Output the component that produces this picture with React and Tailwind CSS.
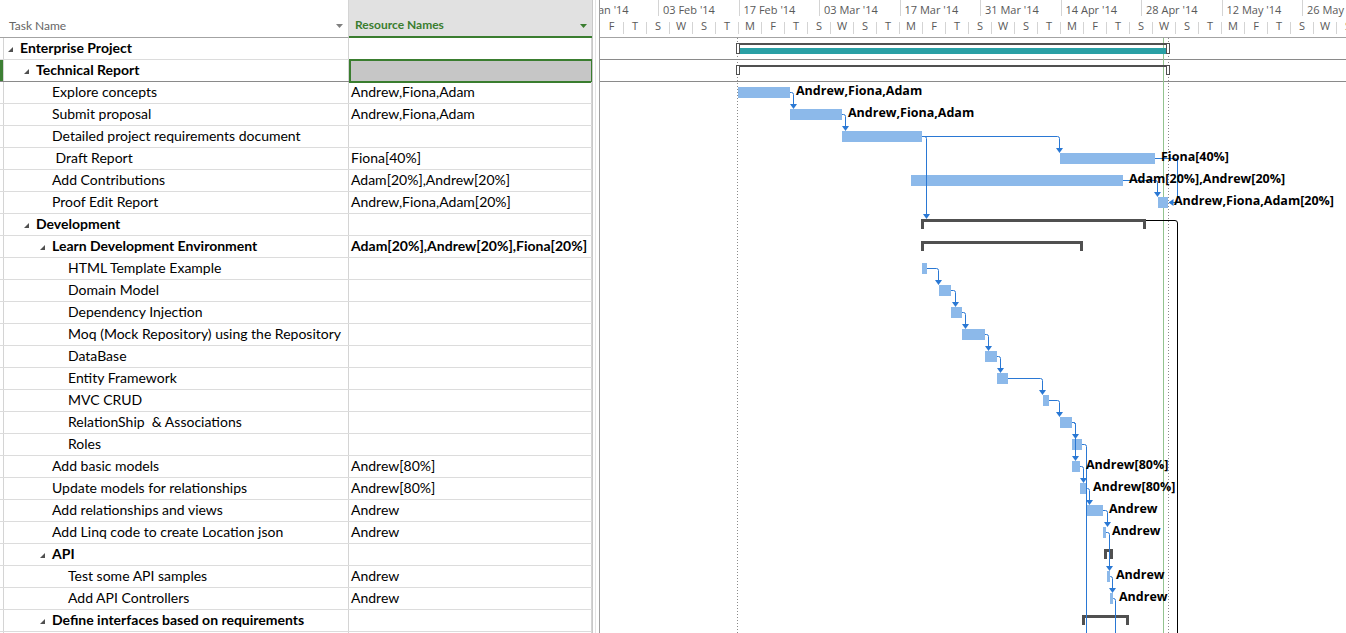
import React from 'react';

const rows = [
  { name: 'Enterprise Project', level: 0, summary: true },
  { name: 'Technical Report', level: 1, summary: true, selected: true },
  { name: 'Explore concepts', level: 2, res: 'Andrew,Fiona,Adam' },
  { name: 'Submit proposal', level: 2, res: 'Andrew,Fiona,Adam' },
  { name: 'Detailed project requirements document', level: 2 },
  { name: ' Draft Report', level: 2, res: 'Fiona[40%]' },
  { name: 'Add Contributions', level: 2, res: 'Adam[20%],Andrew[20%]' },
  { name: 'Proof Edit Report', level: 2, res: 'Andrew,Fiona,Adam[20%]' },
  { name: 'Development', level: 1, summary: true },
  { name: 'Learn Development Environment', level: 2, summary: true, res: 'Adam[20%],Andrew[20%],Fiona[20%]' },
  { name: 'HTML Template Example', level: 3 },
  { name: 'Domain Model', level: 3 },
  { name: 'Dependency Injection', level: 3 },
  { name: 'Moq (Mock Repository) using the Repository', level: 3 },
  { name: 'DataBase', level: 3 },
  { name: 'Entity Framework', level: 3 },
  { name: 'MVC CRUD', level: 3 },
  { name: 'RelationShip  & Associations', level: 3 },
  { name: 'Roles', level: 3 },
  { name: 'Add basic models', level: 2, res: 'Andrew[80%]' },
  { name: 'Update models for relationships', level: 2, res: 'Andrew[80%]' },
  { name: 'Add relationships and views', level: 2, res: 'Andrew' },
  { name: 'Add Linq code to create Location json', level: 2, res: 'Andrew' },
  { name: 'API', level: 2, summary: true },
  { name: 'Test some API samples', level: 3, res: 'Andrew' },
  { name: 'Add API Controllers', level: 3, res: 'Andrew' },
  { name: 'Define interfaces based on requirements', level: 2, summary: true },
  { name: '', level: 2 },
];

const summaryPad = { 0: 'pl-[4px]', 1: 'pl-[20px]', 2: 'pl-[36px]' };
const taskPad = { 2: 'pl-[48px]', 3: 'pl-[64px]' };

const months = ["03 Feb '14", "17 Feb '14", "03 Mar '14", "17 Mar '14", "31 Mar '14", "14 Apr '14", "28 Apr '14", "12 May '14", "26 May '14"];
const dayLetters = ['F', 'T', 'S', 'W', 'S', 'T', 'M'];

// gantt geometry, page coordinates
const top = (r) => 38 + 22 * r + 5;
const mid = (r) => 38 + 22 * r + 10;

const tasks = [
  [2, 738, 790, 'Andrew,Fiona,Adam'],
  [3, 790, 842, 'Andrew,Fiona,Adam'],
  [4, 842, 922],
  [5, 1060, 1155, 'Fiona[40%]'],
  [6, 911, 1123, 'Adam[20%],Andrew[20%]'],
  [7, 1158, 1168, 'Andrew,Fiona,Adam[20%]'],
  [10, 922, 927],
  [11, 939, 951],
  [12, 951, 962],
  [13, 962, 985],
  [14, 985, 997],
  [15, 997, 1008],
  [16, 1043, 1049],
  [17, 1060, 1072],
  [18, 1072, 1082],
  [19, 1072, 1080, 'Andrew[80%]'],
  [20, 1080, 1087, 'Andrew[80%]'],
  [21, 1087, 1103, 'Andrew'],
  [22, 1103, 1106, 'Andrew'],
  [24, 1107, 1110, 'Andrew'],
  [25, 1110, 1113, 'Andrew'],
];

const summaries = [
  [8, 921, 1146],
  [9, 921, 1083],
  [23, 1104, 1113],
  [26, 1082, 1129],
];

const links = [
  [2, 790, 793, 3],
  [3, 842, 845, 4],
  [4, 922, 1059, 5],
  [4, 922, 926, 8],
  [6, 1123, 1157, 7],
  [10, 927, 938, 11],
  [11, 951, 955, 12],
  [12, 962, 965, 13],
  [13, 985, 988, 14],
  [14, 997, 1000, 15],
  [15, 1008, 1042, 16],
  [16, 1049, 1059, 17],
  [17, 1072, 1075, 19],
  [17, 1072, 1075, 18],
  [19, 1080, 1083, 20],
  [20, 1087, 1089, 21],
  [21, 1103, 1107, 22],
  [22, 1106, 1109, 24],
  [24, 1110, 1112, 25],
];

const LINK = '#2a78d4';
const BAR = '#8cb9ea';
const SUM = '#505050';

const linkPath = (fx, y, vx, yEnd) =>
  `M${fx} ${y + 0.5} H${vx - 1.5} Q${vx + 0.5} ${y + 0.5} ${vx + 0.5} ${y + 2.5} V${yEnd}`;

const Tri = () => (
  <svg width="5" height="5" viewBox="0 0 5 5" className="shrink-0 mt-[3px]">
    <path d="M5 0 L5 5 L0 5 Z" fill="#505050" />
  </svg>
);

const DropArrow = ({ color }) => (
  <svg width="7" height="4" viewBox="0 0 7 4" className="shrink-0">
    <path d="M0 0 H7 L3.5 4 Z" fill={color} />
  </svg>
);

function TaskRow({ row }) {
  const pad = row.summary ? summaryPad[row.level] : taskPad[row.level];
  return (
    <div className={`flex h-[22px] border-b ${row.selected ? 'border-[#8a8a8a]' : 'border-[#dcdcdc]'}`}>
      <div className={`w-[4px] shrink-0 border-r border-[#d4d4d4] ${row.selected ? 'bg-[#3d7f34]' : ''}`} />
      <div className={`w-[345px] shrink-0 flex items-center pb-[2px] border-r border-[#d4d4d4] ${pad}`}>
        {row.summary && <Tri />}
        <span className={`whitespace-pre ${row.summary ? 'ml-[7px] font-bold' : ''}`}>{row.name}</span>
      </div>
      {row.selected ? (
        <div className="w-[244px] shrink-0 -mt-[1px] h-[24px] border-2 border-[#3a7d2f] bg-[#c6c6c6]" />
      ) : (
        <div className={`w-[243px] shrink-0 flex items-center pb-[2px] pl-[2px] border-r border-[#d4d4d4] ${row.summary ? 'font-bold' : ''}`}>
          {row.res}
        </div>
      )}
    </div>
  );
}

function GanttBody() {
  return (
    <svg width="746" height="595" viewBox="600 38 746 595" className="block">
      {/* selected row outline */}
      <line x1="600" x2="1346" y1="59.5" y2="59.5" stroke="#8a8a8a" />
      <line x1="600" x2="1346" y1="81.5" y2="81.5" stroke="#8a8a8a" />

      {/* project start / status / finish lines */}
      <line x1="737.5" x2="737.5" y1="38" y2="633" stroke="#8a8a8a" strokeDasharray="1 2" />
      <line x1="1163.5" x2="1163.5" y1="38" y2="633" stroke="#93c38f" />
      <line x1="1168.5" x2="1168.5" y1="38" y2="633" stroke="#8a8a8a" strokeDasharray="1 2" />

      {/* project summary */}
      <rect x="737" y="43" width="432" height="2" fill={SUM} />
      <rect x="739" y="48" width="428" height="6" fill="#2aa0a5" />
      <rect x="736.5" y="43.5" width="3" height="10" fill="#fff" stroke={SUM} />
      <rect x="1166.5" y="43.5" width="3" height="10" fill="#fff" stroke={SUM} />

      {/* technical report summary */}
      <rect x="737" y="65" width="432" height="2" fill={SUM} />
      <rect x="736.5" y="65.5" width="3" height="9" fill="#fff" stroke={SUM} />
      <rect x="1166.5" y="65.5" width="3" height="9" fill="#fff" stroke={SUM} />

      {summaries.map(([r, x1, x2]) => (
        <g key={`s${r}`} fill={SUM}>
          <rect x={x1} y={top(r)} width={x2 - x1} height="3" />
          <rect x={x1} y={top(r)} width="3" height="10" />
          <rect x={x2 - 3} y={top(r)} width="3" height="10" />
        </g>
      ))}

      {tasks.map(([r, x1, x2]) => (
        <rect key={`b${r}`} x={x1} y={top(r)} width={x2 - x1} height="11" fill={BAR} />
      ))}

      {/* development summary successor */}
      <path d="M1146 220.5 H1175 Q1177.5 220.5 1177.5 223 V633" fill="none" stroke="#000" />

      {links.map(([fr, fx, vx, tr], i) => (
        <g key={`l${i}`}>
          <path d={linkPath(fx, mid(fr), vx, top(tr) - 4)} fill="none" stroke={LINK} />
          <polygon points={`${vx - 3},${top(tr) - 5} ${vx + 4},${top(tr) - 5} ${vx + 0.5},${top(tr)}`} fill={LINK} />
        </g>
      ))}

      {/* long links running off the page */}
      <path d={linkPath(1082, mid(18), 1086, 633)} fill="none" stroke={LINK} />
      <path d={linkPath(1113, mid(25), 1115, 633)} fill="none" stroke={LINK} />

      {/* draft report -> proof edit */}
      <path d={`M1155 ${mid(5) + 0.5} H1175 Q1177.5 ${mid(5) + 0.5} 1177.5 ${mid(5) + 3} V${mid(7) - 2} Q1177.5 ${mid(7) + 0.5} 1175 ${mid(7) + 0.5} H1173`} fill="none" stroke={LINK} />
      <polygon points={`1173.5,${mid(7) - 3} 1173.5,${mid(7) + 4} 1168.5,${mid(7) + 0.5}`} fill={LINK} />

      <g fontFamily="'Open Sans', 'Noto Sans', sans-serif" fontWeight="700" fontSize="12.5" fill="#000">
        {tasks.filter((t) => t[3]).map(([r, , x2, label]) => (
          <text key={`t${r}`} x={x2 + 6} y={top(r) + 7.5}>{label}</text>
        ))}
      </g>
    </svg>
  );
}

export default function App() {
  const cells = Array.from({ length: 33 }, (_, i) => dayLetters[i % 7]);
  return (
    <div className="flex w-[1346px] h-[633px] overflow-hidden bg-white text-black">
      {/* task sheet */}
      <div className="w-[592px] shrink-0 font-['Lato',sans-serif] text-[14px]">
        <div className="flex h-[38px]">
          <div className="w-[349px] shrink-0 flex items-end justify-between pl-[9px] pr-[5px] pb-[5px] border-b border-r border-[#a3a3a3] border-r-[#d4d4d4] text-[12px] text-[#666]">
            <span className="leading-none">Task Name</span>
            <span className="mb-[4px]"><DropArrow color="#808080" /></span>
          </div>
          <div className="w-[243px] shrink-0 flex items-end justify-between pl-[6px] pr-[5px] pb-[5px] bg-[#e1e1e1] border-b-2 border-[#3a7d2f] text-[12px] font-bold text-[#3a7d2f]">
            <span className="leading-none">Resource Names</span>
            <span className="mb-[3px]"><DropArrow color="#3a7d2f" /></span>
          </div>
        </div>
        {rows.map((row, i) => (
          <TaskRow key={i} row={row} />
        ))}
      </div>

      {/* splitter */}
      <div className="w-[8px] shrink-0 flex border-l border-[#c8c8c8] border-r border-r-[#a0a0a0]">
        <div className="w-[2px]" />
        <div className="w-[1px] bg-[#e4e4e4]" />
      </div>

      {/* gantt chart */}
      <div className="flex-1 min-w-0 flex flex-col">
        <div className="h-[38px] border-b border-[#a3a3a3] font-['Open_Sans',sans-serif] text-[11px] text-[#595959] overflow-hidden">
          <div className="flex h-[18px]">
            <div className="w-[58px] shrink-0 h-[16px] overflow-hidden pt-[2px] leading-[15px]">
              <span className="block whitespace-nowrap -ml-[5px]">Jan '14</span>
            </div>
            {months.map((m) => (
              <div key={m} className="w-[80.5px] shrink-0 h-[16px] border-l border-[#d4d4d4] pl-[4px] pt-[2px] leading-[15px] whitespace-nowrap">
                {m}
              </div>
            ))}
          </div>
          <div className="flex h-[19px]">
            {cells.map((d, i) => (
              <div key={i} className="w-[23px] shrink-0 pt-[4px]">
                <div className={`h-[12px] flex justify-center ${i === 0 ? '' : 'border-l border-[#d4d4d4]'}`}>
                  <span className="leading-[12px] -mt-[2px]">{d}</span>
                </div>
              </div>
            ))}
          </div>
        </div>
        <GanttBody />
      </div>
    </div>
  );
}
